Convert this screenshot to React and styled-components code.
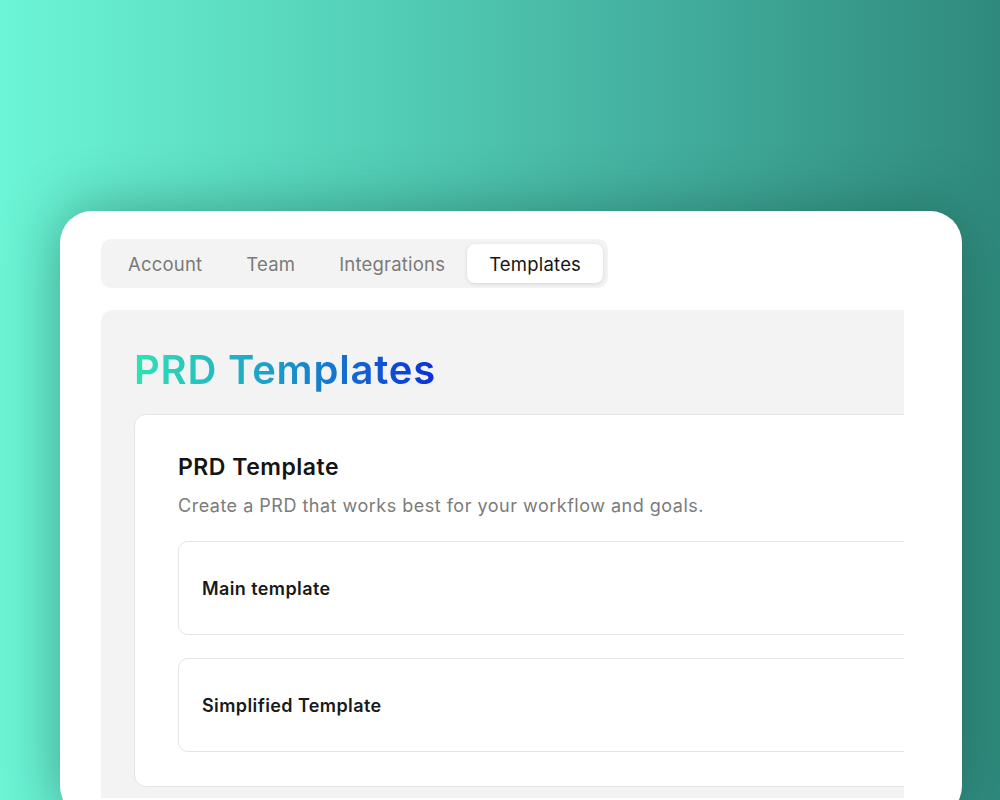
import React from 'react';
import styled, { createGlobalStyle } from 'styled-components';

const GlobalStyle = createGlobalStyle`
  html, body {
    margin: 0;
    padding: 0;
  }
  body {
    font-family: 'Inter', 'Noto Sans', sans-serif;
    -webkit-font-smoothing: antialiased;
  }
`;

const Page = styled.div`
  width: 1000px;
  height: 800px;
  overflow: hidden;
  background: linear-gradient(90deg, #6cf5d6 0%, #55d2b9 35%, #44b09f 65%, #2f8a7d 100%);
  padding: 211px 0 0 60px;
  box-sizing: border-box;
`;

const Window = styled.div`
  width: 902px;
  height: 607px;
  background: #ffffff;
  border-radius: 32px;
  box-shadow: 0 0 60px rgba(18, 70, 60, 0.45);
  padding: 28px 0 0 41px;
  box-sizing: border-box;
`;

const Viewport = styled.div`
  width: 803px;
  overflow: hidden;
`;

const Tabs = styled.div`
  display: inline-flex;
  align-items: center;
  padding: 5px;
  background: #f3f3f3;
  border-radius: 10px;
`;

const Tab = styled.div`
  height: 39px;
  display: flex;
  align-items: center;
  padding: 0 22px;
  font-size: 18.5px;
  letter-spacing: 0.2px;
  color: ${(p) => (p.$active ? '#161616' : '#7a7a7a')};
  background: ${(p) => (p.$active ? '#ffffff' : 'transparent')};
  border-radius: 8px;
  box-shadow: ${(p) => (p.$active ? '0 1px 4px rgba(0,0,0,0.12)' : 'none')};
`;

const Panel = styled.div`
  width: 900px;
  margin-top: 22px;
  background: #f3f3f3;
  border-radius: 12px 0 0 0;
  padding: 35px 0 11px 33px;
  box-sizing: border-box;
`;

const Heading = styled.h1`
  margin: 0 0 20px;
  font-size: 40px;
  line-height: 49px;
  font-weight: 600;
  letter-spacing: 0.8px;
  display: inline-block;
  background: linear-gradient(90deg, #2ee4b4 0%, #1c9fc9 45%, #0a30d8 100%);
  -webkit-background-clip: text;
  background-clip: text;
  color: transparent;
`;

const Card = styled.div`
  background: #ffffff;
  border: 1px solid #e4e4e4;
  border-radius: 12px;
  padding: 37px 0 34px 43px;
  display: flex;
  flex-direction: column;
`;

const CardTitle = styled.h2`
  margin: 0;
  font-size: 23px;
  line-height: 30px;
  font-weight: 600;
  letter-spacing: 0.5px;
  color: #141414;
`;

const CardText = styled.p`
  margin: 12px 0 23px;
  font-size: 18px;
  line-height: 24px;
  letter-spacing: 0.5px;
  color: #7b7b7b;
`;

const Rows = styled.div`
  display: flex;
  flex-direction: column;
  gap: 23px;
`;

const Row = styled.div`
  height: 94px;
  display: flex;
  align-items: center;
  padding-left: 23px;
  border: 1px solid #e4e4e4;
  border-radius: 10px;
  font-size: 18px;
  font-weight: 600;
  letter-spacing: 0.4px;
  color: #1a1a1a;
  box-sizing: border-box;
`;

const tabs = ['Account', 'Team', 'Integrations', 'Templates'];
const templates = ['Main template', 'Simplified Template'];

const App = () => {
  return (
    <Page>
      <GlobalStyle />
      <Window>
        <Viewport>
          <Tabs>
            {tabs.map((t) => (
              <Tab key={t} $active={t === 'Templates'}>
                {t}
              </Tab>
            ))}
          </Tabs>
          <Panel>
            <Heading>PRD Templates</Heading>
            <Card>
              <CardTitle>PRD Template</CardTitle>
              <CardText>Create a PRD that works best for your workflow and goals.</CardText>
              <Rows>
                {templates.map((t) => (
                  <Row key={t}>{t}</Row>
                ))}
              </Rows>
            </Card>
          </Panel>
        </Viewport>
      </Window>
    </Page>
  );
};

export default App;
